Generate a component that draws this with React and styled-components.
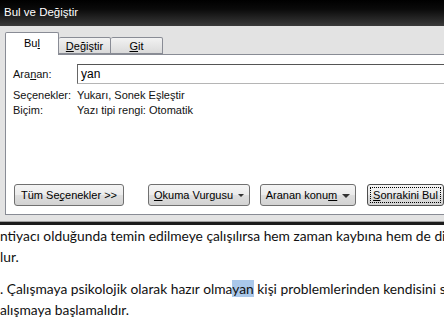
import styled, { createGlobalStyle } from 'styled-components';

const GlobalStyle = createGlobalStyle`
	html, body {
		margin: 0;
		padding: 0;
		width: 444px;
		height: 334px;
		overflow: hidden;
		background: #ffffff;
	}
`;

const Screen = styled.div`
	width: 444px;
	height: 334px;
	overflow: hidden;
	display: flex;
	flex-direction: column;
	font-family: "Liberation Sans", Arial, sans-serif;
`;

const TitleBar = styled.div`
	height: 26px;
	flex: none;
	display: flex;
	align-items: center;
	padding-left: 4px;
	padding-bottom: 2px;
	box-sizing: border-box;
	background: linear-gradient(#000000 0%, #0a0a0a 35%, #3a3a3a 100%);
	color: #ffffff;
	font-size: 11.5px;
`;

const DialogBody = styled.div`
	height: 196px;
	flex: none;
	background: #e3e3e3;
	padding: 6px 0 0 5px;
	box-sizing: border-box;
	border-bottom: 1px solid #a0a0a0;
`;

const TabRow = styled.div`
	display: flex;
	align-items: flex-end;
	height: 22px;
	position: relative;
	z-index: 1;
`;

const Tab = styled.div`
	box-sizing: border-box;
	width: ${p => p.$w}px;
	height: ${p => (p.$active ? 23 : 17)}px;
	margin-bottom: ${p => (p.$active ? -1 : 0)}px;
	border: 1px solid #898c95;
	border-bottom: ${p => (p.$active ? 'none' : '1px solid #898c95')};
	border-left: ${p => (p.$first ? '1px solid #898c95' : 'none')};
	border-radius: 2px 2px 0 0;
	background: ${p => (p.$active ? '#ffffff' : 'linear-gradient(#f2f2f2, #dadada)')};
	display: flex;
	align-items: center;
	justify-content: center;
	padding-bottom: ${p => (p.$active ? 2 : 0)}px;
	font-size: 11px;
	color: #000000;
`;

const Key = styled.span`
	text-decoration: underline;
	text-underline-offset: 1px;
`;

const Panel = styled.div`
	box-sizing: border-box;
	width: 470px;
	height: 161px;
	background: #ffffff;
	border: 1px solid #898c95;
	padding: 9px 0 8px 7px;
	display: flex;
	flex-direction: column;
`;

const Fields = styled.div`
	display: grid;
	grid-template-columns: 64px 1fr;
	grid-template-rows: 23px 15px 15px;
	font-size: 11px;
	color: #111111;
	align-items: center;
`;

const Label = styled.div`
	white-space: nowrap;
`;

const InputLabel = styled(Label)`
	align-self: start;
	height: 20px;
	display: flex;
	align-items: center;
`;

const SearchBox = styled.div`
	align-self: start;
	box-sizing: border-box;
	height: 20px;
	border: 1px solid #b5b5b5;
	border-top-color: #555555;
	border-left-color: #666666;
	padding-left: 3px;
	display: flex;
	align-items: center;
	font-size: 12px;
	color: #000000;
`;

const Spacer = styled.div`
	flex: 1;
`;

const ButtonRow = styled.div`
	display: flex;
	align-items: center;
	padding-left: 1px;
`;

const Button = styled.div`
	box-sizing: border-box;
	width: ${p => p.$w}px;
	height: 22px;
	margin-left: ${p => p.$gap || 0}px;
	border: 1px solid ${p => (p.$default ? '#4d4d4d' : '#707070')};
	border-radius: 3px;
	background: linear-gradient(#f4f4f4 0%, #ececec 48%, #dedede 52%, #d2d2d2 100%);
	display: flex;
	align-items: center;
	justify-content: center;
	gap: 5px;
	font-size: 11px;
	color: #000000;
	white-space: nowrap;
	padding: 2px;
`;

const FocusRing = styled.div`
	flex: 1;
	align-self: stretch;
	border: 1px dotted #000000;
	display: flex;
	align-items: center;
	justify-content: center;
`;

const Caret = styled.span`
	width: 0;
	height: 0;
	border-left: ${p => p.$size}px solid transparent;
	border-right: ${p => p.$size}px solid transparent;
	border-top: ${p => p.$size}px solid #333333;
	margin-top: 1px;
`;

const Document = styled.div`
	flex: 1;
	background: #ffffff;
	border-top: 3px solid #1c1c1c;
	font-family: Lato, "Open Sans", sans-serif;
	font-size: 13.8px;
	color: #111111;
	line-height: 21px;
	white-space: nowrap;
	overflow: hidden;
`;

const Paragraph = styled.div`
	margin-top: ${p => p.$gap || 0}px;
`;

const Match = styled.span`
	background: #aac8ea;
`;

const App = () => {
	return (
		<>
			<GlobalStyle />
			<Screen>
				<TitleBar>Bul ve Değiştir</TitleBar>
				<DialogBody>
					<TabRow>
						<Tab $active $first $w={54}><span>Bu<Key>l</Key></span></Tab>
						<Tab $w={52}><span><Key>D</Key>eğiştir</span></Tab>
						<Tab $w={52}><span><Key>G</Key>it</span></Tab>
					</TabRow>
					<Panel>
						<Fields>
							<InputLabel>Ara<Key>n</Key>an:</InputLabel>
							<SearchBox>yan</SearchBox>
							<Label>Seçenekler:</Label>
							<Label>Yukarı, Sonek Eşleştir</Label>
							<Label>Biçim:</Label>
							<Label>Yazı tipi rengi: Otomatik</Label>
						</Fields>
						<Spacer />
						<ButtonRow>
							<Button $w={110}><span>Tüm Se<Key>ç</Key>enekler &gt;&gt;</span></Button>
							<Button $w={102} $gap={24}><span><Key>O</Key>kuma Vurgusu</span><Caret $size={3} /></Button>
							<Button $w={96} $gap={10}><span>Aranan konu<Key>m</Key></span><Caret $size={4} /></Button>
							<Button $w={77} $gap={11} $default>
								<FocusRing><span><Key>S</Key>onrakini Bul</span></FocusRing>
							</Button>
						</ButtonRow>
					</Panel>
				</DialogBody>
				<Document>
					<Paragraph>ntiyacı olduğunda temin edilmeye çalışılırsa hem zaman kaybına hem de dikkat dağınıklığına</Paragraph>
					<Paragraph>lur.</Paragraph>
					<Paragraph $gap={11}>. Çalışmaya psikolojik olarak hazır olma<Match>yan</Match> kişi problemlerinden kendisini soyutlamalı</Paragraph>
					<Paragraph>alışmaya başlamalıdır.</Paragraph>
				</Document>
			</Screen>
		</>
	);
};

export default App;
